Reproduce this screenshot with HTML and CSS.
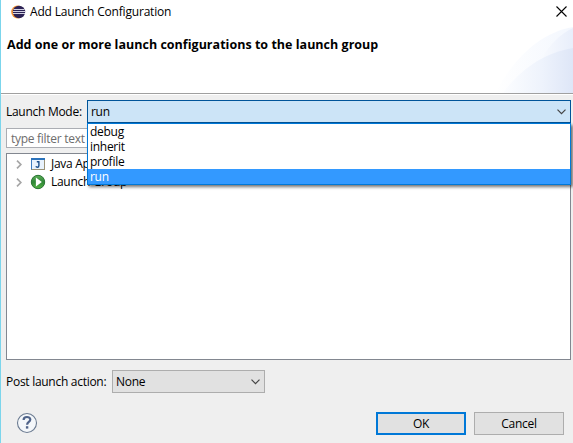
FILE: index.html
```
<!DOCTYPE html>
<html lang="en">
<head>
<meta charset="utf-8">
<title>Add Launch Configuration</title>
<link rel="stylesheet" href="styles.css">
</head>
<body>
<main class="dialog">
  <header class="banner">
    <svg class="swoosh" width="100" height="66" viewBox="0 0 100 66">
      <defs>
        <linearGradient id="outer"><stop offset="0" stop-color="#ffffff"/><stop offset="1" stop-color="#f3f7fe"/></linearGradient>
        <linearGradient id="inner"><stop offset="0" stop-color="#f8fafe"/><stop offset="1" stop-color="#e8eefb"/></linearGradient>
        <linearGradient id="lower"><stop offset="0" stop-color="#fcfdff"/><stop offset=".55" stop-color="#eef3fc"/><stop offset="1" stop-color="#dee6f7"/></linearGradient>
      </defs>
      <path d="M22 66C42 30 67 6 100 0V66Z" fill="url(#outer)"/>
      <path d="M68 33C76 18 87 7 100 1V66H68Z" fill="url(#inner)"/>
      <path d="M30 66C47 43 70 26 100 21V66Z" fill="url(#lower)"/>
    </svg>
    <div class="titlebar">
      <svg class="app-icon" width="15" height="14" viewBox="0 0 15 14">
        <circle cx="6.6" cy="7" r="6.4" fill="#f59331"/>
        <circle cx="8" cy="7" r="6.2" fill="#2c2255"/>
        <path d="M2.5 4.5H13.5M2 6.5H14M2 8.5H14" stroke="#e4e4f2" stroke-width=".9"/>
      </svg>
      <span class="title">Add Launch Configuration</span>
      <svg class="close" width="11" height="11" viewBox="0 0 11 11"><path d="M.5 .5L10.5 10.5M10.5 .5L.5 10.5" stroke="#000" stroke-width="1.1"/></svg>
    </div>
    <h1 class="heading">Add one or more launch configurations to the launch group</h1>
  </header>

  <section class="content">
    <div class="mode-row">
      <span class="mode-label">Launch Mode:</span>
      <div class="combo combo-open">
        <span>run</span>
        <svg class="chevron" width="9" height="6" viewBox="0 0 9 6"><path d="M.5 .7L4.5 4.7L8.5 .7" fill="none" stroke="#444" stroke-width="1.2"/></svg>
        <ul class="menu">
          <li>debug</li>
          <li>inherit</li>
          <li>profile</li>
          <li class="selected">run</li>
        </ul>
      </div>
    </div>
    <div class="filter"><span>type filter text</span></div>
    <div class="tree">
      <div class="node">
        <svg class="arrow" width="6" height="9" viewBox="0 0 6 9"><path d="M1 .7L4.8 4.5L1 8.3" fill="none" stroke="#a6a6a6" stroke-width="1.7"/></svg>
        <svg class="node-icon" width="16" height="16" viewBox="0 0 16 16">
          <rect x="1.5" y="2.5" width="13" height="11" fill="#e8f2fd" stroke="#9b9277"/>
          <path d="M1 2H15V4H1Z" fill="#2c73bb"/>
          <path d="M1.5 4V13.5" stroke="#3d7cc0"/>
          <path d="M6.8 5.8H9.5M8.9 5.8V9.4Q8.9 11.2 7.4 11.2Q6.3 11.2 5.8 10.4" fill="none" stroke="#1b4f8c" stroke-width="1.4"/>
        </svg>
        <span>Java Application</span>
      </div>
      <div class="node">
        <svg class="arrow" width="6" height="9" viewBox="0 0 6 9"><path d="M1 .7L4.8 4.5L1 8.3" fill="none" stroke="#a6a6a6" stroke-width="1.7"/></svg>
        <svg class="node-icon" width="16" height="16" viewBox="0 0 16 16">
          <defs><linearGradient id="run" x2="0" y2="1"><stop offset="0" stop-color="#5eae58"/><stop offset=".5" stop-color="#2f8737"/><stop offset="1" stop-color="#55b443"/></linearGradient></defs>
          <circle cx="8" cy="8" r="6.7" fill="url(#run)" stroke="#287333"/>
          <path d="M5.9 3.4L11.9 8L5.9 12.6Z" fill="#fff"/>
        </svg>
        <span>Launch Group</span>
      </div>
    </div>
    <div class="post-row">
      <span class="post-label">Post launch action:</span>
      <div class="combo combo-post">
        <span>None</span>
        <svg class="chevron" width="9" height="6" viewBox="0 0 9 6"><path d="M.5 .7L4.5 4.7L8.5 .7" fill="none" stroke="#444" stroke-width="1.2"/></svg>
      </div>
    </div>
  </section>

  <footer class="footer">
    <svg class="help" width="22" height="22" viewBox="0 0 22 22">
      <circle cx="11" cy="11" r="9.5" fill="#f4f7fa" stroke="#6b7b91" stroke-width="1.1"/>
      <path d="M7.6 8C7.6 4 14.3 4.2 14.3 7.6C14.3 10 11.1 9.9 11.1 12.8" fill="none" stroke="#50648a" stroke-width="2.2"/>
      <rect x="9.9" y="14.2" width="2.4" height="2.4" fill="#50648a"/>
    </svg>
    <div class="button primary">OK</div>
    <div class="button">Cancel</div>
  </footer>
</main>
</body>
</html>
```
FILE: styles.css
```
* { box-sizing: border-box; }
body {
  margin: 0;
  background: #efefef;
  color: #000;
  font: 12px/16px "Open Sans", "Noto Sans", sans-serif;
  letter-spacing: -0.28px;
  white-space: nowrap;
}
.dialog {
  width: 573px;
  height: 443px;
  border-left: 1px solid #7bd5ec;
  display: flex;
  flex-direction: column;
  overflow: hidden;
}
.banner {
  position: relative;
  height: 95px;
  background: #fff;
  border-bottom: 1px solid #fff;
  box-shadow: inset 0 -1px #a0a0a0;
}
.swoosh { position: absolute; right: 0; bottom: 1px; }
.titlebar { position: relative; display: flex; align-items: center; height: 23px; padding: 0 6px 0 10px; }
.title { margin-left: 4px; letter-spacing: -0.19px; }
.close { margin-left: auto; }
.heading {
  position: relative;
  margin: 13px 0 0 6px;
  font-size: 12.5px;
  line-height: 17px;
  font-weight: 700;
  letter-spacing: 0.02px;
}
.content { padding: 5px 2px 0 5px; }
.mode-row { display: flex; align-items: center; height: 23px; }
.mode-label { width: 81px; }
.combo {
  position: relative;
  display: flex;
  align-items: center;
  justify-content: space-between;
  height: 23px;
  padding: 0 4px 0 3px;
  border: 1px solid #adadad;
  background: #e1e1e1;
}
.combo-open { flex: 1; border-color: #005499; background: #cce4f7; }
.menu {
  position: absolute;
  z-index: 1;
  top: 22px;
  left: -1px;
  right: -1px;
  height: 62px;
  margin: 0;
  padding: 0;
  list-style: none;
  border: 1px solid #0078d7;
  background: #fff;
  box-shadow: 2px 2px 3px rgba(0, 0, 0, .55);
}
.menu li { height: 15px; line-height: 16px; padding-left: 2px; }
.menu .selected { background: #3399ff; color: #fff; }
.filter {
  height: 20px;
  margin-top: 5px;
  padding-left: 4px;
  border: 1px solid #abadb3;
  background: #fff;
  color: #6d6d6d;
  line-height: 19px;
}
.tree {
  height: 207px;
  margin-top: 5px;
  padding: 1px 0 0 9px;
  border: 1px solid #828790;
  background: #fff;
}
.node { display: flex; align-items: center; height: 18px; }
.node-icon { margin: 0 5px 0 8px; }
.post-row { display: flex; align-items: center; margin-top: 10px; }
.post-label { width: 106px; }
.combo-post { width: 153px; }
.footer { display: flex; align-items: center; height: 23px; margin-top: 19px; padding: 0 9px 0 15px; }
.help { margin: 0 auto 2px 0; }
.button {
  width: 90px;
  height: 23px;
  margin-left: 8px;
  border: 1px solid #adadad;
  background: #e1e1e1;
  line-height: 21px;
  text-align: center;
}
.primary { border: 2px solid #0078d7; line-height: 19px; }
```
